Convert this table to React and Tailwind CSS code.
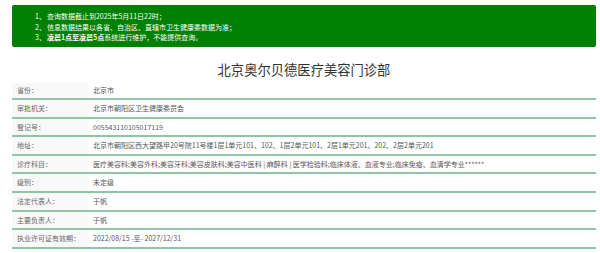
import React from "react";

const rows = [
  ["省份：", "北京市"],
  ["审批机关：", "北京市朝阳区卫生健康委员会"],
  ["登记号：", "005543110105017119"],
  ["地址：", "北京市朝阳区西大望路甲20号院11号楼1层1单元101、102、1层2单元101、2层1单元201、202、2层2单元201"],
  ["诊疗科目：", "医疗美容科;美容外科;美容牙科;美容皮肤科;美容中医科 | 麻醉科 | 医学检验科;临床体液、血液专业;临床免疫、血清学专业******"],
  ["级别：", "未定级"],
  ["法定代表人：", "于帆"],
  ["主要负责人：", "于帆"],
  ["执业许可证有效期：", "2022/08/15 -至- 2027/12/31"],
];

export default function App() {
  return (
    <div
      className="w-[600px] h-[253px] bg-white overflow-hidden"
      style={{ fontFamily: '"Noto Sans CJK SC", "Noto Sans", sans-serif' }}
    >
      <div className="ml-[12px] w-[584px] pt-[5px]">
        <div className="h-[42px] bg-[#008000] rounded-[2px] pl-[23px] pt-[6px] text-white text-[7px] leading-[10.5px]">
          <div className="flex gap-[1px]">
            <span className="whitespace-nowrap">1、</span>
            <span>查询数据截止到2025年5月11日22时；</span>
          </div>
          <div className="flex gap-[1px]">
            <span className="whitespace-nowrap">2、</span>
            <span>信息数据结果以各省、自治区、直辖市卫生健康委数据为准；</span>
          </div>
          <div className="flex gap-[1px]">
            <span className="whitespace-nowrap">3、</span>
            <span>
              <b>凌晨1点至凌晨5点</b>系统进行维护，不能提供查询。
            </span>
          </div>
        </div>
        <div className="h-[36px] pt-[10px] flex items-center justify-center text-[13.3px] text-[#333]">
          北京奥尔贝德医疗美容门诊部
        </div>
        <div className="text-[7px]">
          {rows.map(([k, v], i) => (
            <div
              key={i}
              className={
                "flex items-center border-[#8cc6a4] " +
                (i === 0 ? "h-[17px] border-b-2" : "h-[18.6px] border-b-2")
              }
            >
              <div className="w-[76px] h-full flex items-center pl-[5px] bg-[#f8f8f8] text-[#666]">
                {k}
              </div>
              <div className="pl-[5px] text-[#555] whitespace-nowrap">{v}</div>
            </div>
          ))}
        </div>
      </div>
    </div>
  );
}
